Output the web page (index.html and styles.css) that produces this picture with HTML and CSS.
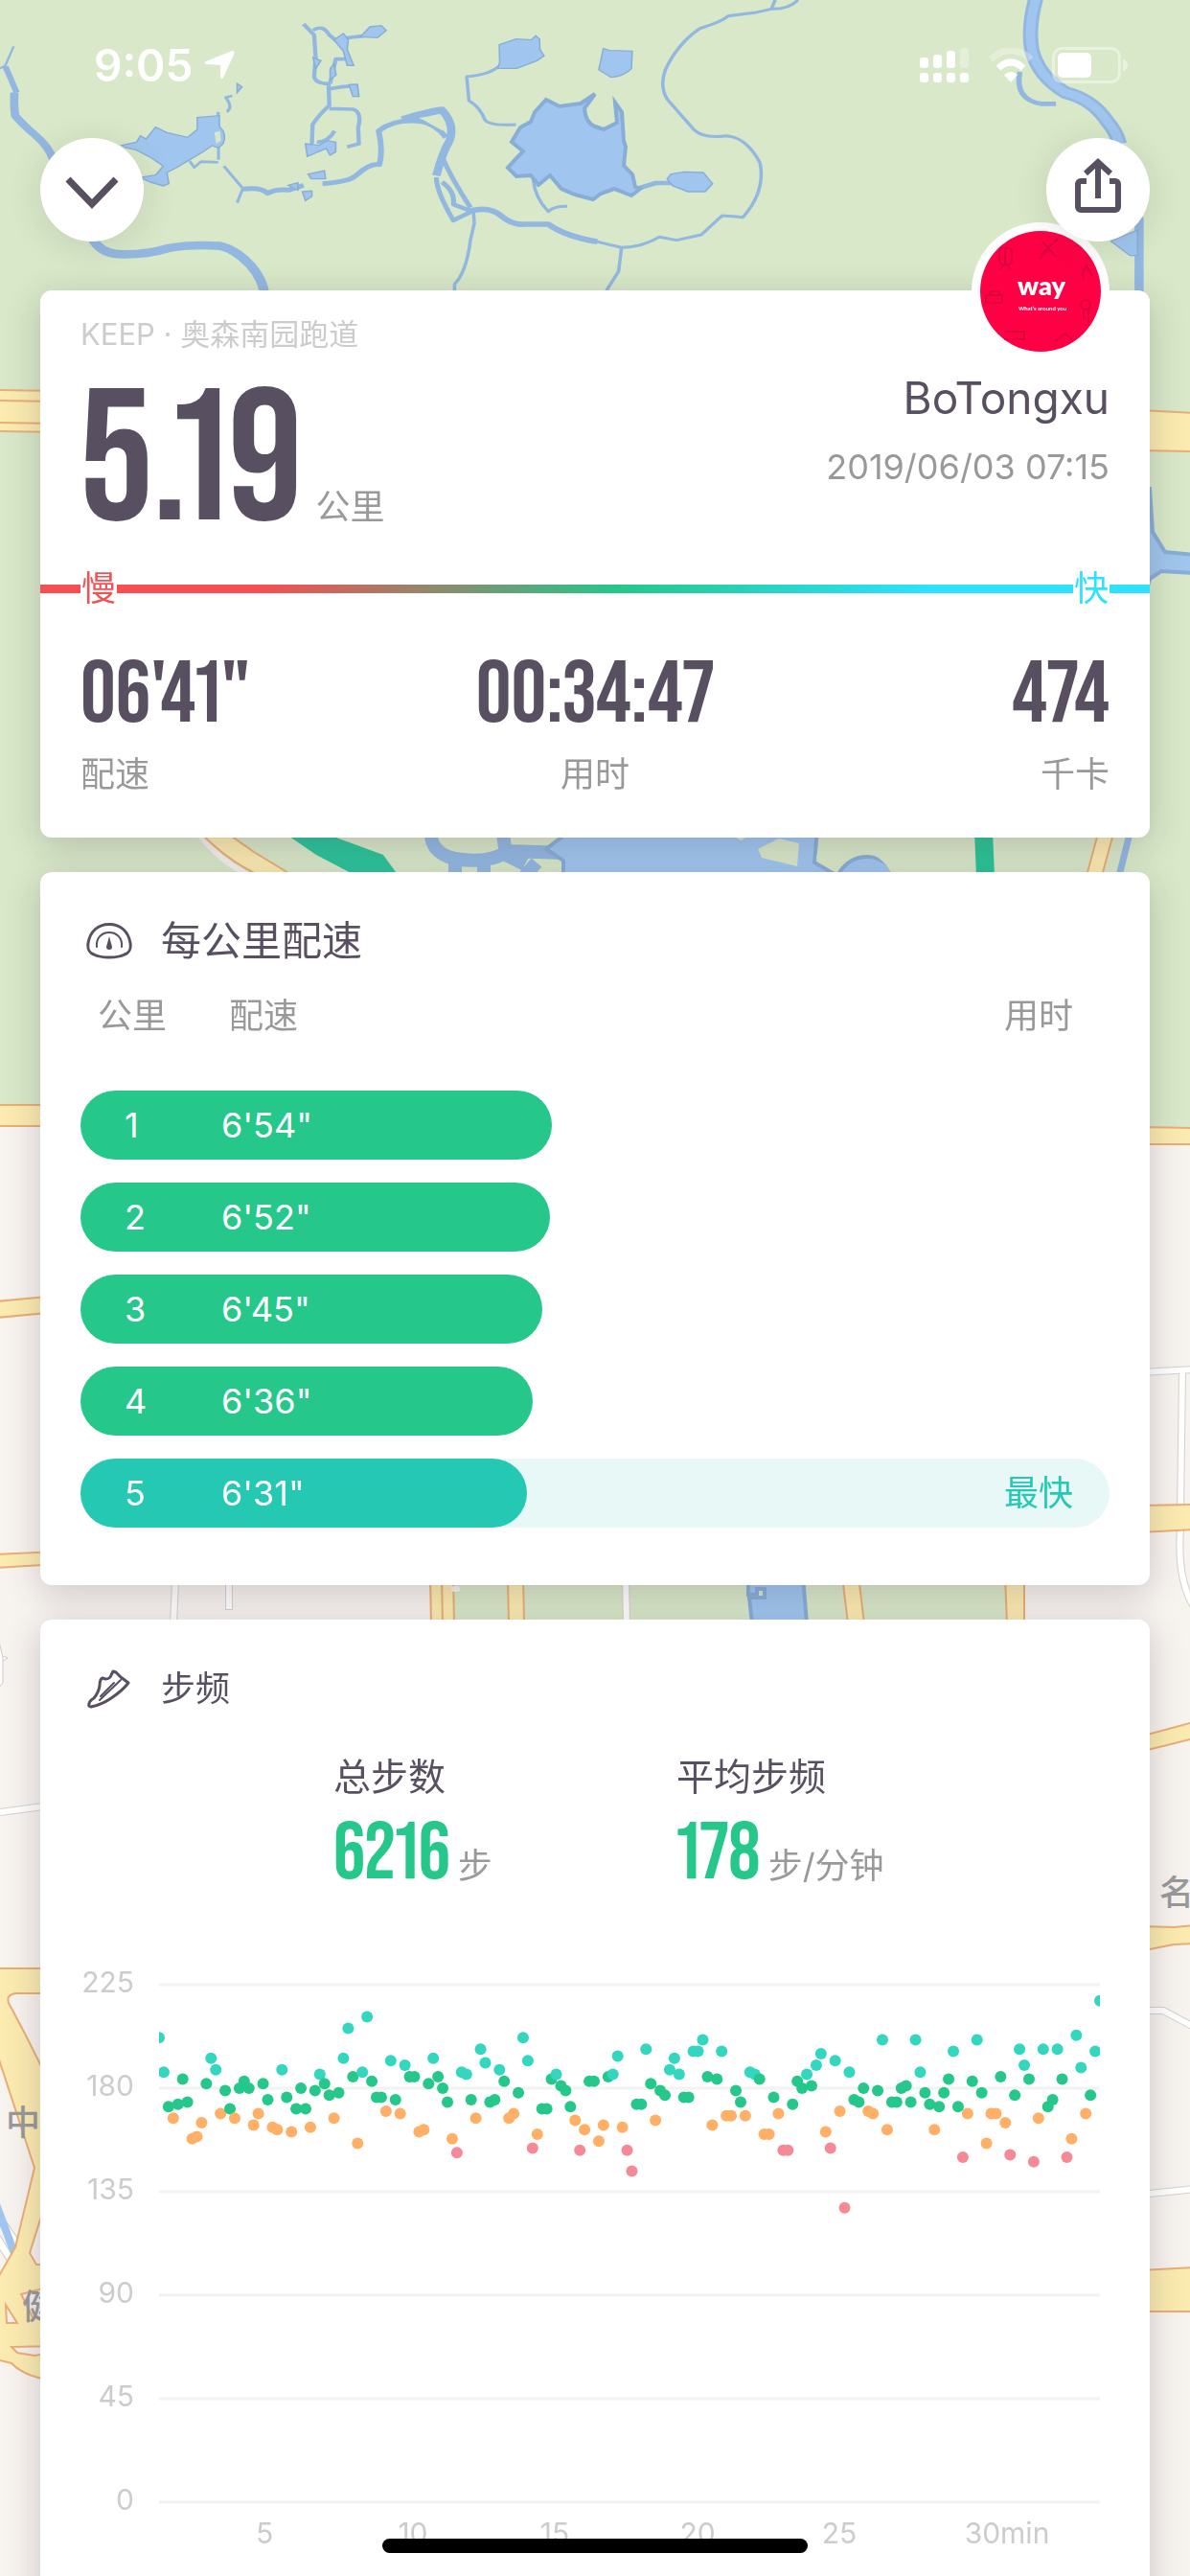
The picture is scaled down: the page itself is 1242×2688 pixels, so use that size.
FILE: index.html
```html
<!DOCTYPE html>
<html lang="zh-CN">
<head>
<meta charset="utf-8">
<meta name="viewport" content="width=device-width, initial-scale=1">
<title>跑步记录</title>
<link rel="stylesheet" href="styles.css">
</head>
<body>
<svg class="map" viewBox="0 0 1242 2688" preserveAspectRatio="xMidYMin slice" aria-hidden="true">
  <rect width="1242" height="2688" fill="#f7f3ef"/>
  <path d="M0 0H1242V1184L621 1168L0 1160Z" fill="#d8e8c8"/>
  <path d="M472 1640H1052V1700H472Z" fill="#d8e8c8"/>
  <!-- lakes and streams, north-west -->
  <g transform="scale(.396 .3333)">
    <g class="stream">
      <path stroke-width="6" d="M36 145L14 205L0 214"/>
      <path stroke-width="16" d="M14 208Q30 250 44 290"/>
      <path stroke-width="22" d="M38 290Q36 330 40 362Q60 390 90 420Q130 460 140 500"/>
      <path stroke-width="26" d="M245 750Q270 800 330 796Q390 796 440 778Q500 764 580 770Q620 780 660 830Q690 870 698 920"/>
      <path stroke-width="11" d="M800 75L828 110L832 180L828 240Q832 262 866 262L868 330Q840 360 824 390L822 450M825 95Q850 75 868 110L905 145M905 120L960 112M910 185L885 185L870 262M868 278Q900 270 935 268M868 340L930 342Q955 350 944 400L946 450L915 460M835 445Q865 445 882 410"/>
      <path stroke-width="8" d="M598 350Q615 335 595 305L612 300M575 350L576 500M500 505L512 524L530 506L575 508M590 520L640 590L625 635"/>
      <path stroke-width="15" d="M640 592Q690 585 705 605Q730 590 760 595L800 580M850 575Q920 570 940 548Q975 510 1000 515Q1010 470 998 410Q1040 370 1110 380Q1150 390 1175 430"/>
      <path stroke-width="22" d="M1060 375Q1130 350 1165 345Q1200 390 1185 440Q1165 480 1150 550"/>
      <path stroke-width="13" d="M1165 490Q1190 560 1240 650M1150 555Q1150 600 1195 690L1250 658M1165 570Q1200 600 1195 640L1240 660"/>
      <path stroke-width="9" d="M1248 665L1250 700L1240 750Q1230 850 1198 890V930"/>
      <path stroke-width="17" d="M1240 660Q1290 645 1320 675Q1350 705 1380 702H1445Q1490 740 1575 757"/>
      <path stroke-width="9" d="M1318 205Q1290 235 1230 240L1236 315Q1265 335 1278 375Q1290 395 1360 390M1405 560Q1410 620 1445 662Q1460 645 1495 646"/>
    </g>
    <g class="lake">
      <path d="M320 455L360 445L370 425L385 435L410 398L440 415L495 430L520 405V368L578 362L578 395Q600 420 588 450Q575 470 560 455Q530 480 500 500L465 525L440 540L445 575L430 582L395 570L370 555L410 548L430 520L400 495L360 470L330 462Z"/>
      <path d="M880 125L905 105L918 125L915 155L932 205L915 205L905 160Z"/><path d="M950 115L975 84L1005 80L1018 95L995 118Z"/>
      <path d="M825 180L846 190L832 215ZM880 200L886 235L870 250V215ZM920 265L942 264L946 302H930ZM805 450L840 455L862 440L885 445V475L870 486L860 465L810 490ZM812 545L855 534L858 560L820 560ZM797 600L822 598V615L805 628ZM760 580L785 572L785 595ZM625 262L638 272L625 290Z"/>
      <path d="M1316 140L1360 122L1400 125L1412 112L1422 122L1423 155L1434 175L1415 190L1362 214H1312L1317 195Z"/>
    </g>
    <path d="M565 415L580 410L582 440L570 450ZM1105 368L1160 365L1168 410Z" fill="#d8e8c8"/>
  </g>
  <!-- lakes and streams, north-east -->
  <g transform="translate(621 0) scale(.396 .3333)">
    <g class="stream">
      <path stroke-width="9" d="M475 0L465 28L420 40L350 50Q340 65 275 90Q215 140 185 220Q170 270 190 310L260 405Q285 435 345 425Q400 430 435 510Q450 600 390 680L335 675L280 735L215 752L170 742Q120 775 70 775L0 755M535 0Q510 30 465 28M70 775L62 850L30 910"/>
      <path stroke-width="14" d="M100 595L160 573H200"/>
      <path stroke-width="40" d="M1162 -5Q1140 90 1152 160Q1170 240 1240 290Q1310 310 1350 380Q1375 415 1382 450"/>
      <path stroke-width="14" d="M1120 225Q1105 310 1175 325H1215"/>
      <path stroke-width="24" d="M1434 680V915"/>
    </g>
    <path class="lake" d="M1360 755L1430 720V800H1410Z"/>
    <path class="lake" d="M22 152L38 158L98 160L96 215Q75 240 42 242L10 218Z"/>
    <path class="lake" d="M200 545L235 538L285 540L310 575L290 600H245L205 582L190 560Z"/>
    <path fill="none" stroke="#a0c6ef" stroke-width="24" d="M1162 -5Q1140 90 1152 160Q1170 240 1240 290Q1310 310 1350 380Q1375 415 1382 450"/>
  </g>
  <path class="lake" d="M570 104L584 111L606 108L621 98L610 113Q611 128 621 132L630 135L644 128L642 107L649 117L651 147L653 153L651 173L660 182L663 195L668 197L659 204L641 197L627 202L619 208L600 203L586 197L574 183L562 193L554 183L539 184L530 175L541 163L546 158L534 148L543 133L554 127L558 117Z"/>
  <!-- running track and lake in the park -->
  <path class="lake" d="M1200 510L1203 555L1216 576L1246 579V598L1212 596L1200 604L1190 640V510Z"/>
  <path d="M206 868Q230 900 262 914" fill="none" stroke="#f2f0ee" stroke-width="6"/>
  <path class="road" d="M210 870L238 870L265 889L306 914H272Q240 900 210 870Z"/>
  <path d="M298 870H340L400 892L416 914H372L330 892Z" fill="#2bc49a"/>
  <g class="stream"><path stroke-width="14" d="M450 866Q448 890 475 896Q510 902 530 888L590 890M525 870L528 892L548 902M475 896V914M505 900V914M560 900L548 914"/></g>
  <path class="lake" d="M596 866L570 886L588 898V918H940Q925 894 905 894Q885 894 874 914L850 900L853 866Z"/>
  <path d="M762 870L773 877L785 870ZM791 886L813 875L834 880L832 904L795 895ZM858 870H960V914H932Q920 890 900 890Q884 892 868 906L852 895Z" fill="#d8e8c8"/>
  <path d="M1017 868H1036L1038 914H1019Z" fill="#2bc496"/>
  <path class="road" d="M1147 866H1163L1150 914H1134Z"/>
  <g class="stream"><path stroke-width="7" d="M1180 866L1168 914"/></g>
  <!-- roads -->
  <path class="road" d="M-4 407L60 408V451L-4 450Z"/>
  <path d="M0 418L60 419M0 441L60 442" class="road"/>
  <path class="road" d="M1190 428L1246 431V471L1190 470ZM-4 1153H60V1175H-4ZM-4 1358L60 1352V1369L-4 1375ZM1190 1176L1246 1177V1194H1190ZM-4 1622L60 1619V1632L-4 1636Z"/>
  <g fill="none" stroke="#d5d0cd" stroke-width="8"><path d="M1190 1432L1246 1429M1234 1432L1232 1580M1232 1596Q1228 1650 1248 1680M183 1650L181 1694M239 1650V1680M0 1891L60 1883M653 1650L654 1694M1190 2098H1214L1248 2116M1190 2290L1248 2284"/></g>
  <g fill="none" stroke="#fff" stroke-width="6"><path d="M1190 1432L1246 1429M1234 1432L1232 1580M1232 1596Q1228 1650 1248 1680M183 1650L181 1694M239 1650V1679M0 1891L60 1883M653 1650L654 1694M1190 2098H1214L1248 2116M1190 2290L1248 2284"/></g>
  <path class="road" d="M1190 1571L1246 1570V1596L1190 1599ZM449 1645H473L474 1694H450ZM461 1645L462 1694M530 1645H546L547 1694H531ZM879 1645H896L902 1694H885ZM1049 1645H1069V1694H1051ZM1190 1812L1246 1797V1814L1190 1828ZM1190 2010L1225 2011L1246 2009V2028L1225 2029L1190 2036Z"/>
  <rect x="471" y="1655" width="9" height="6" rx="3" fill="#f5f3f2"/>
  <path class="lake" d="M781 1645H838L842 1694H785L782 1667H798V1658H790V1664H781Z"/>
  <path d="M-4 1700L3 1730V1756L-4 1764ZM3 1728L8 1730L3 1733" fill="#fff" stroke="#cfcac8"/>
  <!-- interchange, south-west -->
  <path d="M-4 2310L18 2342M-4 2334L14 2362" stroke="#cfcac8" stroke-width="9"/>
  <path d="M-4 2310L18 2342M-4 2334L14 2362" stroke="#fff" stroke-width="7"/>
  <path d="M-4 2300L16 2354" stroke="#a0c6ef" stroke-width="8"/>
  <path class="road" d="M-4 2054H60V2080H16Q6 2082 9 2090L26 2122L60 2190V2302L42 2316L31 2351L38 2363H60V2484Q28 2482 12 2466L-4 2462V2380L16 2345L36 2262L-4 2140Z"/>
  <path class="isle" d="M6 2405L18 2424H7ZM12 2449L60 2448V2454L36 2458L18 2455ZM22 2394L60 2384V2418H34Z"/>
  <path class="road" d="M1190 2369L1246 2366V2412H1190Z"/>
  <g class="place"><text x="6" y="2228">中</text><text x="23" y="2420">健</text><text x="1210" y="1988">名</text></g>
</svg>

<div class="screen">
  <header>
    <div class="status">
      <span class="clock">9:05
        <svg width="32" height="32" viewBox="0 0 32 32" aria-hidden="true"><path d="M30 1q2 0 1.500 3L20 29q-2 3-3-1V16L3 15q-4-1-1-3L28 1.500Z" fill="#fff"/></svg>
      </span>
      <span class="signals">
        <svg width="52" height="36" viewBox="0 0 52 36" aria-label="信号"><g fill="#fff"><rect x="0" y="10" width="9" height="11" rx="3"/><rect x="14" y="7" width="9" height="14" rx="3"/><rect x="28" y="3" width="9" height="18" rx="3"/><rect x="42" width="9" height="21" rx="3" opacity=".3"/><rect x="0" y="26" width="9" height="10" rx="3"/><rect x="14" y="26" width="9" height="10" rx="3"/><rect x="28" y="26" width="9" height="10" rx="3"/><rect x="42" y="26" width="9" height="10" rx="3"/></g></svg>
        <svg width="48" height="36" viewBox="0 0 48 36" aria-label="无线网络"><g fill="none" stroke="#fff"><path d="M3 12Q24-7 45 12" stroke-width="7" opacity=".3"/><path d="M11 21Q24 9 37 21" stroke-width="7"/></g><path d="M17 28Q24 22 31 28L24 36Z" fill="#fff"/></svg>
        <svg width="80" height="38" viewBox="0 0 80 38" aria-label="电池"><rect x="1.500" y="1.500" width="69" height="35" rx="9" fill="none" stroke="#fff" stroke-width="3" opacity=".45"/><path d="M74 12q5 3 5 7t-5 7Z" fill="#fff" opacity=".45"/><rect x="6" y="6" width="35" height="26" rx="5" fill="#fff"/></svg>
      </span>
    </div>
    <nav class="tools">
      <button class="round" aria-label="收起"><svg viewBox="0 0 108 108"><path d="M29 43L54 69L79 43" stroke-width="7"/></svg></button>
      <button class="round" aria-label="分享"><svg viewBox="0 0 108 108"><path d="M42 45H36a3 3 0 0 0-3 3V72a3 3 0 0 0 3 3H72a3 3 0 0 0 3-3V48a3 3 0 0 0-3-3H66M54 63V25M41 37L54 25L67 37" stroke-width="6"/></svg></button>
    </nav>
  </header>

  <main>
    <section class="card summary">
      <svg class="avatar" viewBox="0 0 144 144" role="img" aria-label="way">
        <circle cx="72" cy="72" r="72" fill="#fff"/><circle cx="72" cy="72" r="63" fill="#ff0045"/>
        <g fill="none" stroke="#c8003c" stroke-width="2" opacity=".6"><rect x="29" y="27" width="13" height="17" rx="4"/><path d="M35 28V44M30 49L34 44M41 49L37 44M72 34L90 17M74 20L88 36M80 28L71 38M115 56L120 45L126 56M117 48V60M15 76H32V84H15ZM18 76L20 72H28L30 76M34 114H55V122H34M87 124L98 116L106 124M117 90V102M122 90V104"/><circle cx="119" cy="86" r="5"/></g>
        <text class="logo" x="73" y="76">way</text><text class="motto" x="74" y="92">What’s around you</text>
      </svg>
      <p class="route">KEEP · 奥森南园跑道</p>
      <div class="top">
        <p class="distance"><b>5.19</b><span>公里</span></p>
        <div class="user"><h1>BoTongxu</h1><time datetime="2019-06-03T07:15">2019/06/03 07:15</time></div>
      </div>
      <div class="speed"><span class="slow">慢</span><span class="fast">快</span></div>
      <dl class="stats">
        <div><dt>配速</dt><dd>06'41"</dd></div>
        <div><dt>用时</dt><dd>00:34:47</dd></div>
        <div><dt>千卡</dt><dd>474</dd></div>
      </dl>
    </section>

    <section class="card">
      <h2 class="large"><svg width="48" height="38" viewBox="0 0 48 38" aria-hidden="true"><g fill="none" stroke="#584f60"><path stroke-width="3" d="M24 1.500C36 1.500 44 9 46 21C47 28 45 31 40 33C32 37 16 37 8 33C3 31 1 28 2 21C4 9 12 1.500 24 1.500Z"/><path stroke-width="2" stroke-linecap="round" d="M11 25C10 16 16 10 24 10S38 16 37 25"/></g><path d="M24 14L27 25A3 3 0 1 1 21 25Z" fill="#584f60"/></svg>每公里配速</h2>
      <table class="pace">
        <thead><tr><th>公里</th><th>配速</th><th>用时</th></tr></thead>
        <tbody>
          <tr style="--bar:492px"><td>1</td><td>6'54"</td><td></td></tr>
          <tr style="--bar:490px"><td>2</td><td>6'52"</td><td></td></tr>
          <tr style="--bar:482px"><td>3</td><td>6'45"</td><td></td></tr>
          <tr style="--bar:472px"><td>4</td><td>6'36"</td><td></td></tr>
          <tr class="best" style="--bar:466px"><td>5</td><td>6'31"</td><td>最快</td></tr>
        </tbody>
      </table>
    </section>

    <section class="card">
      <h2><svg width="48" height="42" viewBox="0 0 48 42" aria-hidden="true"><g fill="none" stroke="#584f60" stroke-linejoin="round" stroke-linecap="round"><path stroke-width="3" d="M3 37Q3 34 8 31Q13 25 14 18Q14 11 17 10L20 11Q25 11 26 7L28 3L31 4L36 9L44 15Q38 23 26 31Q16 38 5 40Q2 40 3 37Z"/><path stroke-width="2" d="M36 12L14 33M29 15L15 29"/></g></svg>步频</h2>
      <dl class="cadence">
        <div><dt>总步数</dt><dd><b>6216</b><span>步</span></dd></div>
        <div><dt>平均步频</dt><dd><b>178</b><span>步/分钟</span></dd></div>
      </dl>
      <svg class="chart" viewBox="0 0 1074 640" role="img" aria-label="步频图">
        <g class="grid"><path d="M82 31H1064M82 139H1064M82 247H1064M82 355H1064M82 463H1064M82 571H1064"/></g>
        <g class="y"><text x="56" y="39">225</text><text x="56" y="147">180</text><text x="56" y="255">135</text><text x="56" y="363">90</text><text x="56" y="471">45</text><text x="56" y="579">0</text></g>
        <g class="x"><text x="192" y="614">5</text><text x="347" y="614">10</text><text x="495" y="614">15</text><text x="644" y="614">20</text><text x="792" y="614">25</text><text x="967" y="614">30min</text></g>
        <clipPath id="plot"><rect x="82" y="0" width="982" height="572"/></clipPath>
        <g id="dots" clip-path="url(#plot)"></g>
      </svg>
    </section>
  </main>
</div>
<div class="home"></div>
<script src="chart.js"></script>
</body>
</html>
```
FILE: styles.css
```css
* { box-sizing: border-box; }
body, h1, h2, p, dl, dd { margin: 0; }
html, body { height: 100%; overflow: hidden; }
body {
  font-family: Inter, "Noto Sans CJK SC", sans-serif;
  font-size: 36px;
  line-height: 48px;
  color: #584f60;
}

.map { position: fixed; inset: 0; width: 100%; height: 100%; }
.stream { fill: none; stroke: #92b8e1; stroke-linejoin: round; }
.lake { fill: #a0c6ef; stroke: #88aed8; stroke-width: 4px; }
.road { fill: #fbebb0; stroke: #eaae76; stroke-width: 2px; }
.isle { fill: #f5f0ee; stroke: #eaae76; stroke-width: 2px; }
.place { font-size: 36px; font-weight: 500; fill: #999; }

.screen { position: relative; height: 100%; overflow-y: auto; scrollbar-width: none; }

.status {
  display: flex;
  justify-content: space-between;
  align-items: center;
  height: 144px;
  padding: 0 64px 8px 98px;
}
.clock { display: flex; align-items: center; gap: 12px; font-size: 46px; font-weight: 600; color: #fff; }
.signals { display: flex; align-items: center; gap: 19px; }
.tools { position: relative; z-index: 2; display: flex; justify-content: space-between; padding: 0 42px; }
.round {
  width: 108px;
  height: 108px;
  padding: 0;
  border: 0;
  border-radius: 50%;
  background: #fff;
  box-shadow: 0 6px 36px rgba(70, 60, 70, .14);
}
.round svg { display: block; fill: none; stroke: #584f60; }

main { display: grid; gap: 36px; padding: 51px 42px 36px; }
.card {
  position: relative;
  padding: 42px 42px 60px;
  border-radius: 12px;
  background: #fff;
  box-shadow: 0 8px 36px rgba(70, 55, 70, .24);
}

.summary { padding: 28px 42px 42px; }
.avatar { position: absolute; top: -71px; right: 42px; width: 144px; height: 144px; }
.logo { font: 800 27px Lato, sans-serif; fill: #fff; text-anchor: middle; }
.motto { font: 700 6px Lato, sans-serif; fill: #fff; text-anchor: middle; }
.route { font-size: 31px; line-height: 36px; color: #ccc; }
.top { display: flex; justify-content: space-between; margin-top: 18px; }
.distance { display: flex; align-items: baseline; gap: 14px; }
.distance b, .stats dd, .cadence b {
  font-family: "Bebas Neue", "Roboto Condensed", sans-serif;
  font-weight: 400;
  font-variant-numeric: proportional-nums;
}
.distance b { font-size: 196px; line-height: 198px; }
.distance span { color: #999; }
.user { display: grid; align-content: start; gap: 18px; text-align: right; }
.user h1 { font-size: 46px; line-height: 60px; font-weight: 400; }
.user time { color: #999; }

.speed {
  display: flex;
  justify-content: space-between;
  margin: 7px -42px 42px;
  padding: 0 42px;
  background: linear-gradient(90deg, #f54f52 20%, #24c789 52%, #2de1ff 80%) center / 100% 9px no-repeat;
}
.speed span { padding: 0 1px; background: #fff; }
.slow { color: #f05256; }
.fast { color: #2de1ff; }

.stats { display: grid; grid-template-columns: repeat(3, 1fr); text-align: center; }
.stats div { display: flex; flex-direction: column-reverse; gap: 12px; }
.stats div:first-child { text-align: left; }
.stats div:last-child { text-align: right; }
.stats dt { color: #999; }
.stats dd { font-size: 92px; line-height: 92px; }

h2 { display: flex; align-items: center; gap: 30px; padding-left: 6px; font-size: 36px; line-height: 60px; font-weight: 400; }
h2.large { font-size: 42px; }

.pace { display: block; margin-top: 24px; }
.pace thead, .pace tbody { display: block; }
.pace tr { position: relative; display: grid; }
.pace th, .pace td { padding: 0; text-align: left; font-weight: 400; }
.pace th { color: #999; }
.pace thead tr { padding: 0 38px 0 18px; grid-template-columns: 137px 1fr auto; }
.pace tbody { display: grid; gap: 24px; margin-top: 54px; }
.pace tbody tr { padding: 0 38px 0 46px; grid-template-columns: 101px 1fr auto; border-radius: 36px; line-height: 72px; color: #fff; }
.pace tbody tr::before {
  content: "";
  position: absolute;
  inset: 0 auto 0 0;
  width: var(--bar);
  border-radius: 36px;
  background: #25c78a;
}
.pace td { position: relative; }
.pace .best { background: #e7f8f6; }
.pace .best::before { background: #24c8b3; }
.pace .best td:last-child { color: #24c8b3; }

.cadence { display: grid; grid-template-columns: 1fr 1fr; margin-top: 38px; padding: 0 94px 0 264px; }
.cadence dt { font-size: 39px; }
.cadence dd { display: flex; align-items: baseline; gap: 8px; margin-top: 12px; }
.cadence b { font-size: 84px; line-height: 90px; color: #25c78a; }
.cadence span { color: #999; }

.chart { display: block; width: 100%; margin-top: 60px; font-size: 30px; }
.chart text { fill: #ccc; }
.grid { stroke: #f2f2f2; stroke-width: 3px; }
.y { text-anchor: end; }
.x { text-anchor: middle; }

.home {
  position: fixed;
  bottom: 24px;
  left: 50%;
  width: 444px;
  height: 15px;
  margin-left: -222px;
  border-radius: 8px;
  background: #000;
}
```
FILE: chart.js
```js
// Steps per minute, one sample about every ten seconds.
const samples = [
  202,187,172,167,173,184,174,158,159,165,182,193,188,169,179,171,167,180,183,180,
  164,169,182,175,163,162,188,176,161,171,180,171,163,179,186,182,177,167,178,193,
  206,185,156,187,211,183,176,176,170,192,175,169,190,185,185,161,162,182,193,185,
  180,174,158,152,187,186,175,167,197,191,174,175,188,183,167,169,178,202,192,154,
  160,171,171,184,186,181,179,172,166,153,162,183,183,157,164,185,186,194,163,153,
  144,173,173,197,182,166,179,177,188,193,186,176,176,196,196,201,185,164,184,196,
  168,168,179,174,168,187,186,184,160,160,176,169,153,153,173,183,180,186,181,190,
  195,161,154,192,170,128,187,175,174,180,170,169,179,201,162,174,174,180,181,174,
  201,187,178,173,162,172,178,184,196,172,150,169,183,201,178,156,169,169,185,165,
  151,177,197,190,184,148,167,197,172,175,197,184,150,158,203,189,169,177,196,218
];
const plot = { left: 82, width: 982, zero: 571, perStep: 2.4 };

function colour(v) {
  if (v > 185) return "#33d6be";
  if (v > 170) return "#25c78a";
  if (v > 155) return "#ffb066";
  return "#f58a96";
}

const dots = document.getElementById("dots");
samples.forEach((v, i) => {
  const c = document.createElementNS("http://www.w3.org/2000/svg", "circle");
  c.setAttribute("cx", plot.left + i * plot.width / (samples.length - 1));
  c.setAttribute("cy", plot.zero - v * plot.perStep);
  c.setAttribute("r", 6);
  c.setAttribute("fill", colour(v));
  dots.append(c);
});
```
